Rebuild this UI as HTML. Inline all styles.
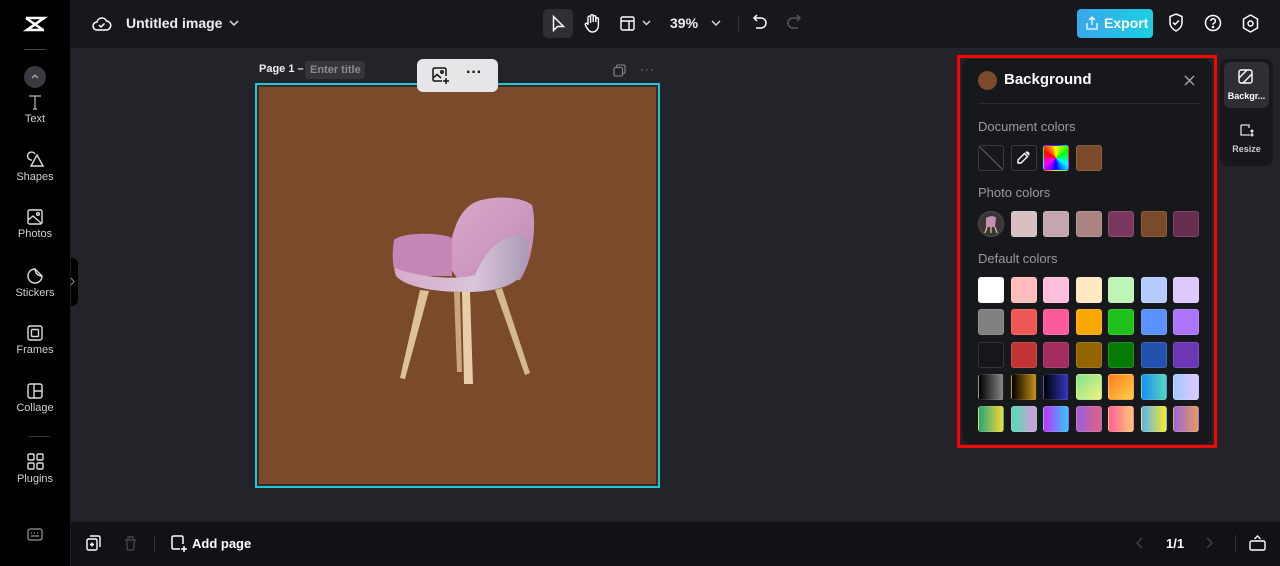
<!DOCTYPE html>
<html><head><meta charset="utf-8"><style>
*{margin:0;padding:0;box-sizing:border-box}
body{width:1280px;height:566px;overflow:hidden;background:#232429;font-family:"Liberation Sans",sans-serif;position:relative;color:#fff}
.a{position:absolute}
.side{left:0;top:0;width:71px;height:566px;background:#000;border-right:1px solid #1c1d21}
.top{left:71px;top:0;width:1209px;height:48px;background:#17181c}
.bot{left:71px;top:521px;width:1209px;height:45px;background:#111215;border-top:1px solid #1c1d21}
.nav{width:70px;text-align:center;font-size:11px;color:#cfd0d3}
.nav svg{display:block;margin:0 auto 3px}
.sw{position:absolute;width:26px;height:26px;border-radius:3px;border:1px solid rgba(255,255,255,.12)}
.lbl{position:absolute;left:978px;font-size:13px;color:#9a9ba0}
svg{overflow:visible}
</style></head><body>
<div class="a side"></div>
<svg class="a" style="left:24px;top:14px" width="22" height="20" viewBox="0 0 22 20" fill="none" stroke="#fff" stroke-width="2.6"><path d="M2 4h18L3 16h17"/><path d="M2 4l17 12" /></svg>
<div class="a" style="left:24px;top:49px;width:22px;height:1px;background:#444"></div>
<div class="a" style="left:24px;top:66px;width:22px;height:22px;border-radius:50%;background:#3a3b40"></div>
<svg class="a" style="left:31px;top:74px" width="8" height="5" viewBox="0 0 8 5" fill="none" stroke="#aaa" stroke-width="1.3"><path d="M1 4l3-3 3 3"/></svg>
<div class="a nav" style="top:94px"><svg width="16" height="16" viewBox="0 0 16 16" fill="none" stroke="#bbb" stroke-width="1.2"><path d="M2 2h12M8 2v13M6 15h4"/></svg>Text</div>
<div class="a nav" style="top:151px"><svg width="18" height="17" viewBox="0 0 18 17" fill="none" stroke="#ddd" stroke-width="1.4"><path d="M6 9a4 4 0 1 1 3-6"/><path d="M11 4l6 11H5z"/></svg>Shapes</div>
<div class="a nav" style="top:209px"><svg width="16" height="16" viewBox="0 0 16 16" fill="none" stroke="#ddd" stroke-width="1.4"><rect x="1" y="1" width="14" height="14" rx="1.5"/><path d="M1 11l5-4 8 7"/><circle cx="11" cy="5" r="1.3"/></svg>Photos</div>
<div class="a nav" style="top:267px"><svg width="17" height="17" viewBox="0 0 17 17" fill="none" stroke="#ddd" stroke-width="1.4"><path d="M15 9A7 7 0 1 1 8 2c0 4 3 7 7 7zM8 2l7 7"/></svg>Stickers</div>
<div class="a nav" style="top:325px"><svg width="16" height="16" viewBox="0 0 16 16" fill="none" stroke="#ddd" stroke-width="1.4"><rect x="1" y="1" width="14" height="14" rx="2"/><rect x="4.5" y="4.5" width="7" height="7" rx="1"/></svg>Frames</div>
<div class="a nav" style="top:383px"><svg width="16" height="16" viewBox="0 0 16 16" fill="none" stroke="#ddd" stroke-width="1.4"><rect x="1" y="1" width="14" height="14" rx="2"/><path d="M7 1v14M7 8h8"/></svg>Collage</div>
<div class="a" style="left:28px;top:436px;width:22px;height:1px;background:#333"></div>
<div class="a nav" style="top:453px"><svg width="17" height="17" viewBox="0 0 17 17" fill="none" stroke="#ddd" stroke-width="1.4"><rect x="1" y="1" width="6" height="6" rx="1.3"/><rect x="10" y="1" width="6" height="6" rx="1.3"/><rect x="1" y="10" width="6" height="6" rx="1.3"/><rect x="10" y="10" width="6" height="6" rx="1.3"/></svg>Plugins</div>
<svg class="a" style="left:27px;top:528px" width="16" height="13" viewBox="0 0 16 13" fill="none" stroke="#999" stroke-width="1.2"><rect x="1" y="1" width="14" height="11" rx="2"/><path d="M4 5h1M7 5h1M10 5h1M4 8h8"/></svg>
<div class="a" style="left:71px;top:258px;width:7px;height:48px;background:#000;border-radius:0 6px 6px 0"></div>
<svg class="a" style="left:70px;top:277px" width="5" height="9" viewBox="0 0 5 9" fill="none" stroke="#888"><path d="M1 1l3 3.5L1 8"/></svg>

<div class="a top"></div>
<svg class="a" style="left:92px;top:15px" width="19" height="16" viewBox="0 0 19 16" fill="none" stroke="#fff" stroke-width="1.5"><path d="M5 15a4 4 0 0 1 0-8 5 5 0 0 1 9.5-1A4.5 4.5 0 0 1 14 15z"/><path d="M7 10l2 2 3.5-3.5"/></svg>
<div class="a" style="left:126px;top:15px;font-size:14px;font-weight:bold;color:#eee">Untitled image</div>
<svg class="a" style="left:229px;top:20px" width="10" height="6" viewBox="0 0 10 6" fill="none" stroke="#ddd" stroke-width="1.5"><path d="M1 1l4 4 4-4"/></svg>
<div class="a" style="left:543px;top:9px;width:30px;height:29px;border-radius:5px;background:#2e2f35"></div>
<svg class="a" style="left:552px;top:15px" width="13" height="17" viewBox="0 0 13 17" fill="none" stroke="#fff" stroke-width="1.5"><path d="M1.5 1.5v14l4-4h6z"/></svg>
<svg class="a" style="left:584px;top:14px" width="16" height="19" viewBox="0 0 16 19" fill="none" stroke="#fff" stroke-width="1.4"><path d="M4 10V3.5a1.3 1.3 0 0 1 2.6 0V9M6.6 8V2a1.3 1.3 0 0 1 2.6 0v6M9.2 8V3a1.3 1.3 0 0 1 2.6 0v5M11.8 8V5a1.3 1.3 0 0 1 2.6 0v6c0 4-2.5 7-6 7-3 0-4.5-2-6-5l-1-2a1.3 1.3 0 0 1 2.3-1.2L4 11"/></svg>
<svg class="a" style="left:620px;top:16px" width="15" height="15" viewBox="0 0 15 15" fill="none" stroke="#fff" stroke-width="1.4"><rect x="1" y="1" width="13" height="13" rx="1.5"/><path d="M1 5h13M9 5v9"/></svg>
<svg class="a" style="left:642px;top:20px" width="9" height="6" viewBox="0 0 9 6" fill="none" stroke="#ddd" stroke-width="1.4"><path d="M1 1l3.5 3.5L8 1"/></svg>
<div class="a" style="left:670px;top:15px;font-size:14px;font-weight:bold;color:#eee">39%</div>
<svg class="a" style="left:711px;top:20px" width="10" height="6" viewBox="0 0 10 6" fill="none" stroke="#ddd" stroke-width="1.4"><path d="M1 1l4 4 4-4"/></svg>
<div class="a" style="left:738px;top:15px;width:1px;height:17px;background:#333"></div>
<svg class="a" style="left:753px;top:14px" width="14" height="17" viewBox="0 0 14 17" fill="none" stroke="#fff" stroke-width="1.5"><path d="M4 1L1 4l3 3M1 4h7a5 5 0 0 1 0 10H3"/></svg>
<svg class="a" style="left:787px;top:14px" width="14" height="17" viewBox="0 0 14 17" fill="none" stroke="#555" stroke-width="1.5"><path d="M10 1l3 3-3 3M13 4H6a5 5 0 0 0 0 10h5"/></svg>
<div class="a" style="left:1077px;top:9px;width:76px;height:29px;border-radius:4px;background:linear-gradient(90deg,#3aa7ee,#1ccfe0)"></div>
<svg class="a" style="left:1086px;top:16px" width="12" height="14" viewBox="0 0 12 14" fill="none" stroke="#fff" stroke-width="1.3"><path d="M6 9V1M3 4l3-3 3 3M1 7v6h10V7"/></svg>
<div class="a" style="left:1104px;top:15px;font-size:14px;font-weight:bold">Export</div>
<svg class="a" style="left:1168px;top:13px" width="16" height="19" viewBox="0 0 16 19" fill="none" stroke="#fff" stroke-width="1.5"><path d="M8 1l6 2.5v6c0 4-3 7-6 8.5-3-1.5-6-4.5-6-8.5v-6z"/><path d="M5 9.5l2 2 4-4"/></svg>
<svg class="a" style="left:1204px;top:14px" width="18" height="18" viewBox="0 0 18 18" fill="none" stroke="#fff" stroke-width="1.5"><circle cx="9" cy="9" r="7.5"/><path d="M6.8 7a2.3 2.3 0 1 1 3 2.2c-.6.3-.8.8-.8 1.5"/><circle cx="9" cy="13" r=".5" fill="#fff"/></svg>
<svg class="a" style="left:1242px;top:14px" width="17" height="19" viewBox="0 0 17 19" fill="none" stroke="#fff" stroke-width="1.5"><path d="M8.5 1l7 4v9l-7 4-7-4V5z"/><circle cx="8.5" cy="9.5" r="2.5"/></svg>

<div class="a" style="left:259px;top:63px;font-size:11px;font-weight:bold;color:#eee">Page 1 –</div>
<div class="a" style="left:305px;top:61px;width:60px;height:18px;border-radius:3px;background:#35363b;font-size:11px;color:#8a8b90;padding:3px 0 0 5px;font-weight:bold">Enter title</div>
<svg class="a" style="left:613px;top:64px" width="13" height="13" viewBox="0 0 13 13" fill="none" stroke="#888" stroke-width="1.1"><rect x="1" y="3.5" width="8.5" height="8.5" rx="1.5"/><path d="M3.5 3.5V2.5A1.5 1.5 0 0 1 5 1h5.5A1.5 1.5 0 0 1 12 2.5V8a1.5 1.5 0 0 1-1.5 1.5h-1"/></svg>
<div class="a" style="left:640px;top:62px;font-size:12px;color:#888;letter-spacing:1px">···</div>
<div class="a" style="left:255px;top:83px;width:405px;height:405px;border:2px solid #1ec6d8;background:#3a2a22;padding:2px"><div style="width:100%;height:100%;background:#7b4a2a"></div></div>
<div class="a" style="left:417px;top:59px;width:81px;height:33px;border-radius:6px;background:#e6e6e8"></div>
<svg class="a" style="left:432px;top:67px" width="18" height="18" viewBox="0 0 18 18" fill="none" stroke="#111" stroke-width="1.5"><path d="M10 14H2.5A1.5 1.5 0 0 1 1 12.5v-10A1.5 1.5 0 0 1 2.5 1h10A1.5 1.5 0 0 1 14 2.5V9"/><path d="M1 11l4-3.5 4 3.5"/><circle cx="10" cy="5" r="1.2"/><path d="M14 11v6M11 14h6"/></svg>
<div class="a" style="left:466px;top:64px;font-size:16px;font-weight:bold;color:#111">···</div>

<!-- chair -->
<svg class="a" style="left:370px;top:180px" width="180" height="210" viewBox="0 0 180 210">
<defs>
<linearGradient id="bk" x1="0" y1="0" x2="1" y2="1"><stop offset="0" stop-color="#dba8cc"/><stop offset="1" stop-color="#c08ab4"/></linearGradient>
<linearGradient id="st" x1="0" y1="0" x2="1" y2="0"><stop offset="0" stop-color="#d8aacb"/><stop offset="0.6" stop-color="#d9c5d8"/><stop offset="1" stop-color="#a99ab5"/></linearGradient>
</defs>
<path d="M50 110L30 198l5 1 24-88z" fill="#dcc19a"/>
<path d="M132 108l28 85-5 2-30-85z" fill="#d4b88f"/>
<path d="M84 112l3 80h5l-2-80z" fill="#c9a77a"/>
<path d="M92 112l2 92h9l-3-92z" fill="#e6cfa8"/>
<path d="M78 85C80 55 88 28 108 21C128 15 152 17 162 25C167 45 163 80 150 100L90 102Z" fill="url(#bk)"/>
<path d="M24 60C32 52 70 52 82 58L82 96L26 96C22 85 22 72 24 60Z" fill="#c486b5"/>
<path d="M25 88C50 98 88 100 105 95C115 72 128 58 150 55C162 58 160 82 150 97C140 108 120 112 95 112C60 112 35 106 26 96Z" fill="url(#st)"/>
</svg>

<div class="a" style="left:957px;top:55px;width:260px;height:393px;border:3px solid #f00;background:#232429"></div>
<div class="a" style="left:962px;top:59px;width:250px;height:385px;border-radius:8px;background:#17181c"></div>
<div class="a" style="left:978px;top:71px;width:19px;height:19px;border-radius:50%;background:#7b4a2a"></div>
<div class="a" style="left:1004px;top:71px;font-size:15px;font-weight:bold">Background</div>
<svg class="a" style="left:1184px;top:75px" width="11" height="11" viewBox="0 0 11 11" stroke="#aaa" stroke-width="1.3"><path d="M1 1l9 9M10 1l-9 9"/></svg>
<div class="a" style="left:978px;top:103px;width:222px;height:1px;background:#2c2d32"></div>
<div class="lbl" style="top:119px">Document colors</div>
<div class="sw" style="left:978px;top:145px;background:#17181c;border-color:#3a3b40;overflow:hidden"><svg width="26" height="26"><path d="M0 0L26 26" stroke="#666" stroke-width="1"/></svg></div>
<div class="sw" style="left:1011px;top:145px;background:#17181c;border-color:#3a3b40"></div>
<svg class="a" style="left:1017px;top:150px" width="14" height="15" viewBox="0 0 14 15" fill="none" stroke="#fff" stroke-width="1.4"><path d="M9 2l3 3M7.5 3.5l3 3L4 13H1v-3z"/><path d="M9 2.5a1.8 1.8 0 0 1 2.5 2.5"/></svg>
<div class="sw" style="left:1043px;top:145px;background:conic-gradient(#ff0 0,#0f0 60deg,#0ff 120deg,#00f 180deg,#f0f 240deg,#f00 300deg,#ff0 360deg)"></div>
<div class="sw" style="left:1076px;top:145px;background:#7b4a2a"></div>
<div class="lbl" style="top:185px">Photo colors</div>
<div class="sw" style="left:978px;top:211px;border-radius:50%;background:#3a3536"></div>
<svg class="a" style="left:982px;top:214px" width="18" height="20" viewBox="0 0 18 20"><path d="M4 4c3-2 8-3 10 0l-1 9H4z" fill="#c68fb2"/><path d="M5 13l-2 6M13 13l2 6M9 13v6" stroke="#d8be95" stroke-width="1.3"/></svg>
<div class="sw" style="left:1011px;top:211px;background:#d8c0c2"></div>
<div class="sw" style="left:1043px;top:211px;background:#c5a6b1"></div>
<div class="sw" style="left:1076px;top:211px;background:#ab8482"></div>
<div class="sw" style="left:1108px;top:211px;background:#7a3860"></div>
<div class="sw" style="left:1141px;top:211px;background:#7b4a2a"></div>
<div class="sw" style="left:1173px;top:211px;background:#672d50"></div>
<div class="lbl" style="top:251px">Default colors</div>
<div class="sw" style="left:978px;top:277px;background:#fff"></div>
<div class="sw" style="left:1011px;top:277px;background:#ffbcbc"></div>
<div class="sw" style="left:1043px;top:277px;background:#ffbfdc"></div>
<div class="sw" style="left:1076px;top:277px;background:#ffe9c2"></div>
<div class="sw" style="left:1108px;top:277px;background:#bff4b9"></div>
<div class="sw" style="left:1141px;top:277px;background:#b7ccfe"></div>
<div class="sw" style="left:1173px;top:277px;background:#dfc8fd"></div>
<div class="sw" style="left:978px;top:309px;background:#808080"></div>
<div class="sw" style="left:1011px;top:309px;background:#f05858"></div>
<div class="sw" style="left:1043px;top:309px;background:#fd5a9b"></div>
<div class="sw" style="left:1076px;top:309px;background:#f8a700"></div>
<div class="sw" style="left:1108px;top:309px;background:#1fc11c"></div>
<div class="sw" style="left:1141px;top:309px;background:#5a92ff"></div>
<div class="sw" style="left:1173px;top:309px;background:#ad75fd"></div>
<div class="sw" style="left:978px;top:342px;background:#16171b;border-color:#33343a"></div>
<div class="sw" style="left:1011px;top:342px;background:#c23534"></div>
<div class="sw" style="left:1043px;top:342px;background:#a42b5d"></div>
<div class="sw" style="left:1076px;top:342px;background:#936400"></div>
<div class="sw" style="left:1108px;top:342px;background:#067c07"></div>
<div class="sw" style="left:1141px;top:342px;background:#2251af"></div>
<div class="sw" style="left:1173px;top:342px;background:#6c37b4"></div>
<div class="sw" style="left:978px;top:374px;background:linear-gradient(90deg,#000,#888)"></div>
<div class="sw" style="left:1011px;top:374px;background:linear-gradient(90deg,#000,#c8911a)"></div>
<div class="sw" style="left:1043px;top:374px;background:linear-gradient(90deg,#000,#3437c5)"></div>
<div class="sw" style="left:1076px;top:374px;background:linear-gradient(135deg,#7de58f,#f5f07e)"></div>
<div class="sw" style="left:1108px;top:374px;background:linear-gradient(135deg,#ff7a1a,#ffd24a)"></div>
<div class="sw" style="left:1141px;top:374px;background:linear-gradient(90deg,#1a8ff5,#57d6b8)"></div>
<div class="sw" style="left:1173px;top:374px;background:linear-gradient(90deg,#9fcaff,#e4c7ff)"></div>
<div class="sw" style="left:978px;top:406px;background:linear-gradient(90deg,#25a57a,#f5d836)"></div>
<div class="sw" style="left:1011px;top:406px;background:linear-gradient(90deg,#4de0b0,#e097e0)"></div>
<div class="sw" style="left:1043px;top:406px;background:linear-gradient(90deg,#c630fa,#2fc9f8)"></div>
<div class="sw" style="left:1076px;top:406px;background:linear-gradient(90deg,#9c5fe0,#e06082)"></div>
<div class="sw" style="left:1108px;top:406px;background:linear-gradient(90deg,#ff5f9a,#ffc870)"></div>
<div class="sw" style="left:1141px;top:406px;background:linear-gradient(90deg,#5bb3f2,#f7e82a)"></div>
<div class="sw" style="left:1173px;top:406px;background:linear-gradient(90deg,#9a66d8,#e59a5f)"></div>

<div class="a" style="left:1220px;top:59px;width:53px;height:107px;border-radius:8px;background:#17181c"></div>
<div class="a" style="left:1224px;top:62px;width:45px;height:46px;border-radius:6px;background:#2e2f35"></div>
<svg class="a" style="left:1238px;top:69px" width="15" height="15" viewBox="0 0 15 15" fill="none" stroke="#fff" stroke-width="1.4"><rect x="1" y="1" width="13" height="13" rx="2"/><path d="M1 9l8-8M5 14l9-9"/></svg>
<div class="a" style="left:1224px;top:91px;width:45px;text-align:center;font-size:9px;font-weight:bold">Backgr...</div>
<svg class="a" style="left:1238px;top:122px" width="16" height="16" viewBox="0 0 16 16" fill="none" stroke="#ddd" stroke-width="1.3"><path d="M3 3h8v3M3 3v10h9M14 8v6M12.5 9.5L14 8l1.5 1.5M12.5 12.5L14 14l1.5-1.5"/></svg>
<div class="a" style="left:1224px;top:144px;width:45px;text-align:center;font-size:9px;font-weight:bold;color:#ccc">Resize</div>

<div class="a bot"></div>
<svg class="a" style="left:86px;top:535px" width="15" height="16" viewBox="0 0 15 16" fill="none" stroke="#fff" stroke-width="1.4"><rect x="1" y="4" width="10" height="11" rx="1.5"/><path d="M4 1h8.5A1.5 1.5 0 0 1 14 2.5V12M6 7.5v4M4 9.5h4"/></svg>
<svg class="a" style="left:124px;top:535px" width="13" height="16" viewBox="0 0 13 16" fill="none" stroke="#444" stroke-width="1.4"><path d="M1 5h11M4 5V2h5v3M2.5 5l1 10h6l1-10"/></svg>
<div class="a" style="left:154px;top:535px;width:1px;height:17px;background:#333"></div>
<svg class="a" style="left:171px;top:535px" width="17" height="18" viewBox="0 0 17 18" fill="none" stroke="#fff" stroke-width="1.5"><path d="M9 14H2.5A1.5 1.5 0 0 1 1 12.5v-10A1.5 1.5 0 0 1 2.5 1h8A1.5 1.5 0 0 1 12 2.5V9"/><path d="M13 11v6M10 14h6"/></svg>
<div class="a" style="left:192px;top:536px;font-size:13px;font-weight:bold">Add page</div>
<svg class="a" style="left:1136px;top:537px" width="7" height="12" viewBox="0 0 7 12" fill="none" stroke="#444" stroke-width="1.4"><path d="M6 1L1 6l5 5"/></svg>
<div class="a" style="left:1166px;top:536px;font-size:13px;font-weight:bold">1/1</div>
<svg class="a" style="left:1206px;top:537px" width="7" height="12" viewBox="0 0 7 12" fill="none" stroke="#444" stroke-width="1.4"><path d="M1 1l5 5-5 5"/></svg>
<div class="a" style="left:1235px;top:535px;width:1px;height:17px;background:#333"></div>
<svg class="a" style="left:1249px;top:535px" width="17" height="16" viewBox="0 0 17 16" fill="none" stroke="#fff" stroke-width="1.4"><rect x="1" y="6" width="15" height="9" rx="1.5"/><path d="M5.5 4l3-3 3 3"/></svg>
</body></html>
